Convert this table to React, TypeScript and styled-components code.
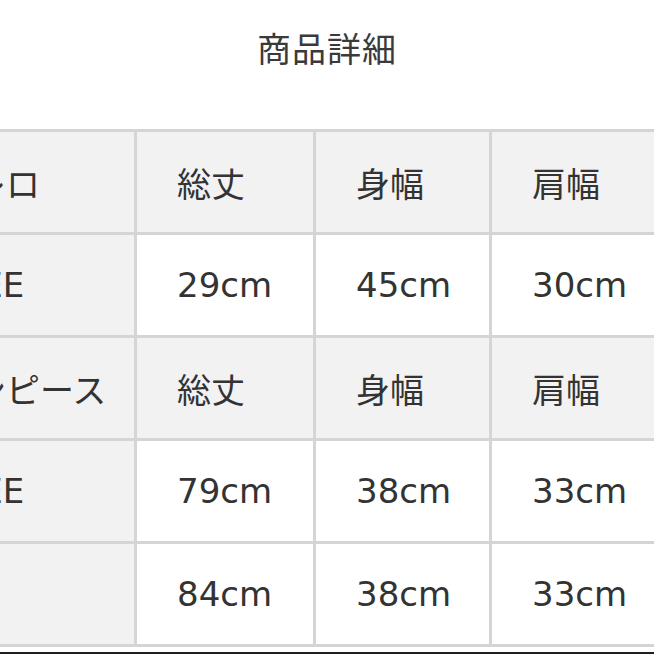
import React from 'react';
import styled, { createGlobalStyle } from 'styled-components';

const GlobalStyle = createGlobalStyle`
  html, body {
    margin: 0;
    padding: 0;
    background: #ffffff;
  }
  body {
    font-family: "Noto Sans CJK JP", "Noto Sans", sans-serif;
    color: #333333;
  }
`;

const Page = styled.div`
  width: 654px;
  height: 654px;
  overflow: hidden;
  position: relative;
  display: flex;
  flex-direction: column;
`;

const Header = styled.div`
  height: 129px;
  display: flex;
  justify-content: center;
  padding-top: 24px;
  box-sizing: border-box;
`;

const Title = styled.h1`
  margin: 0;
  font-size: 34px;
  font-weight: 400;
  line-height: 48px;
  letter-spacing: 1px;
  color: #3a3a3a;
`;

const Table = styled.div`
  display: grid;
  grid-template-columns: 236px 176px 173px 176px;
  grid-auto-rows: 100px;
  gap: 3px;
  padding: 3px;
  margin-left: -105px;
  width: max-content;
  background: #d5d5d5;
`;

const Cell = styled.div<{ $shade?: boolean }>`
  display: flex;
  align-items: center;
  padding-left: 40px;
  background: ${(p) => (p.$shade ? '#f2f2f2' : '#ffffff')};
  font-family: "DejaVu Sans", "Noto Sans CJK JP", sans-serif;
  font-size: 34px;
  color: #333333;
  white-space: nowrap;
`;

const BottomEdge = styled.div`
  position: absolute;
  left: 0;
  right: 0;
  bottom: 0;
  height: 2px;
  background: #1e1e1e;
`;

type Row = { label: string; cells: string[]; head?: boolean };

const rows: Row[] = [
  { label: 'ボレロ', cells: ['総丈', '身幅', '肩幅'], head: true },
  { label: 'FREE', cells: ['29cm', '45cm', '30cm'] },
  { label: 'ワンピース', cells: ['総丈', '身幅', '肩幅'], head: true },
  { label: 'FREE', cells: ['79cm', '38cm', '33cm'] },
  { label: '', cells: ['84cm', '38cm', '33cm'] },
];

const App: React.FC = () => {
  return (
    <>
      <GlobalStyle />
      <Page>
        <Header>
          <Title>商品詳細</Title>
        </Header>
        <Table>
          {rows.map((row, i) => (
            <React.Fragment key={i}>
              <Cell $shade>{row.label}</Cell>
              {row.cells.map((c, j) => (
                <Cell key={j} $shade={row.head}>
                  {c}
                </Cell>
              ))}
            </React.Fragment>
          ))}
        </Table>
        <BottomEdge />
      </Page>
    </>
  );
};

export default App;
